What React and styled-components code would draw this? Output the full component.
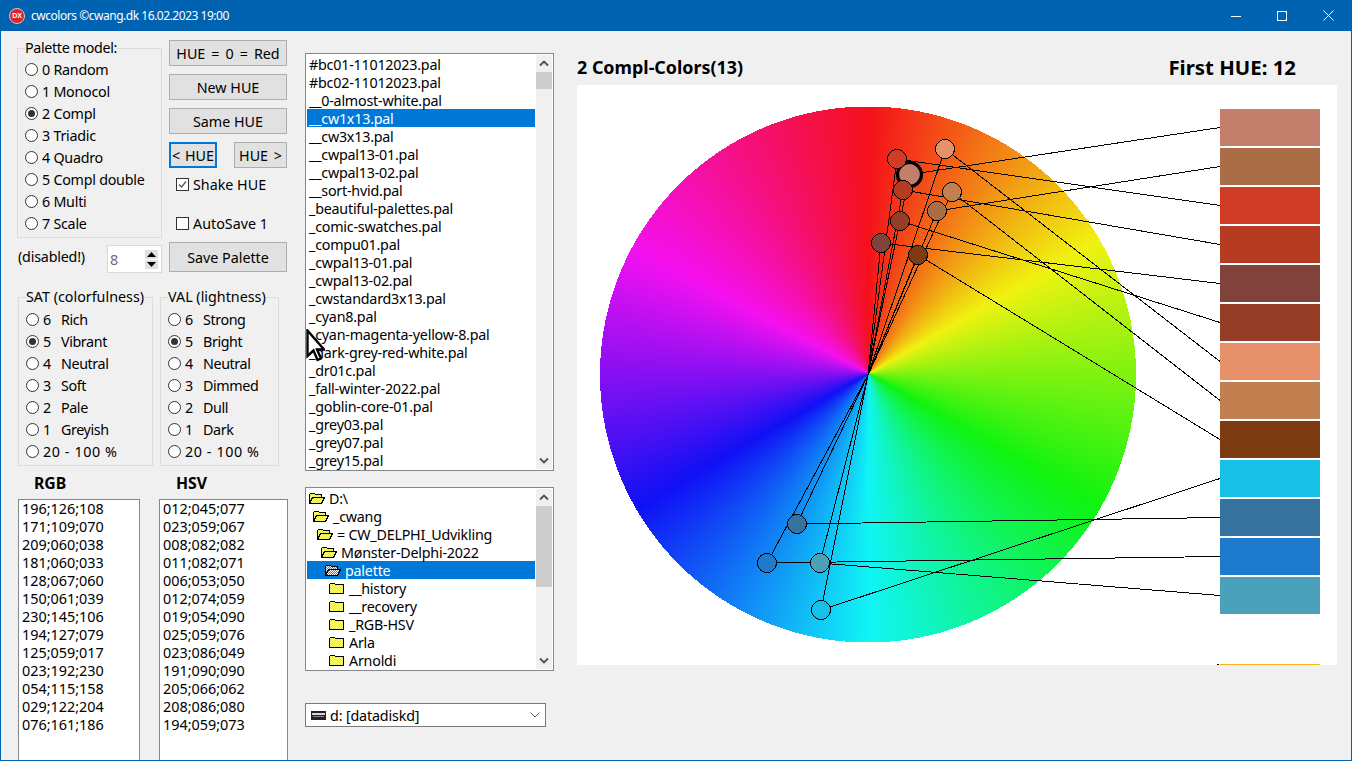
import React from 'react';
import styled, { createGlobalStyle } from 'styled-components';

const Global = createGlobalStyle`
  html, body { margin: 0; padding: 0; overflow: hidden; background: #f0f0f0; }
  body { font-family: "Noto Sans", "Open Sans", sans-serif; font-size: 14.3px; color: #000; }
  fieldset, legend { margin: 0; padding: 0; }
`;

const Window = styled.div`
  position: relative; width: 1352px; height: 761px; box-sizing: border-box;
  display: flex; flex-direction: column; overflow: hidden;
  background: #f0f0f0; border: 1px solid #0063b1; border-top: 0;
`;
const TitleBar = styled.header`
  flex: none; height: 31px; margin: 0 -1px; background: #0063b1; color: #fff;
  display: flex; align-items: center; padding: 0 1px 0 9px; font-size: 12px;
`;
const AppBadge = styled.span`
  width: 16px; height: 16px; border-radius: 50%; background: #d9262c; border: 1px solid #d8c8c8;
  color: #fff; font-size: 7px; font-weight: 700; display: flex; align-items: center; justify-content: center;
  margin-right: 6px; box-sizing: border-box; font-family: "Liberation Sans", sans-serif; flex: none;
`;
const TitleText = styled.span` flex: 1; white-space: nowrap; letter-spacing: -0.47px; `;
const WinButton = styled.span`
  width: 46px; height: 31px; display: flex; align-items: center; justify-content: center; flex: none;
`;
const Body = styled.main`
  flex: 1; min-height: 0; display: flex; padding: 8px 0 0 16px; overflow: hidden;
`;
const ControlsColumn = styled.section`
  width: 272px; flex: none; display: flex; flex-direction: column;
`;
const TopRow = styled.div` display: flex; gap: 7px; `;
const PaletteCol = styled.div` width: 145px; flex: none; `;
const ButtonCol = styled.div` width: 118px; flex: none; padding-top: 1px; display: flex; flex-direction: column; `;
const Group = styled.fieldset`
  box-sizing: border-box; width: ${p => p.$w}px; border: 1px solid #dcdcdc; padding: ${p => p.$pt}px 0 3px 7px; min-width: 0;
`;
const Legend = styled.legend` line-height: 18px; padding: 0; white-space: nowrap; letter-spacing: ${p => p.$ls || 0}px; `;
const RadioRow = styled.div`
  height: 22px; display: flex; align-items: center; gap: 4px; white-space: nowrap; letter-spacing: ${p => p.$ls || 0}px;
`;
const RadioMark = styled.span`
  width: 13px; height: 13px; box-sizing: border-box; border: 1px solid #333; border-radius: 50%; background: #fff;
  flex: none; display: flex; align-items: center; justify-content: center;
  &::after { content: ''; width: 7px; height: 7px; border-radius: 50%; background: ${p => p.$on ? '#333' : 'transparent'}; }
`;
const RadioNum = styled.span` width: 14px; flex: none; `;
const Button = styled.button`
  box-sizing: border-box; height: ${p => p.$h || 26}px; width: ${p => p.$w ? p.$w + 'px' : '100%'};
  margin: ${p => p.$mt || 0}px 0 0; padding: 0; background: #e1e1e1; color: #000;
  border: ${p => p.$focus ? '2px solid #0078d7' : '1px solid #adadad'};
  font: inherit; white-space: nowrap; display: block; word-spacing: ${p => p.$ws || 0}px;
`;
const HueRow = styled.div` display: flex; justify-content: space-between; margin-top: 8px; `;
const CheckRow = styled.div`
  display: flex; align-items: center; gap: 4px; height: 18px; margin: ${p => p.$mt}px 0 0 7px; white-space: nowrap;
`;
const CheckMark = styled.span`
  width: 13px; height: 13px; box-sizing: border-box; border: 1px solid #333; background: #fff; flex: none;
  display: flex; align-items: center; justify-content: center;
`;
const SpinRow = styled.div` display: flex; align-items: center; justify-content: space-between; margin: 7px 0 0 1px; height: 28px; `;
const SpinLabel = styled.span` padding-bottom: 6px; letter-spacing: -0.2px; `;
const SpinBox = styled.div`
  box-sizing: border-box; width: 55px; height: 28px; background: #fff; border: 1px solid #d9d9d9;
  display: flex; align-items: center; justify-content: space-between; padding: 0 3px 0 2px; color: #6d6d6d;
`;
const SpinArrows = styled.div` display: flex; flex-direction: column; gap: 1px; `;
const SpinArrow = styled.span`
  width: 13px; height: 9px; background: #e1e1e1; border: 0; display: flex; align-items: center; justify-content: center;
`;
const GroupsRow = styled.div` display: flex; gap: 7px; margin: 15px 0 0 1px; `;
const ValuesGrid = styled.div`
  display: grid; grid-template-columns: 122px 129px; column-gap: 19px; margin: 8px 0 0 1px;
`;
const ValueHead = styled.div` font-weight: 700; line-height: 18px; padding-left: ${p => p.$pl}px; height: 25px; font-size: 15.8px; `;
const ValueBox = styled.div`
  box-sizing: border-box; height: 300px; background: #fff; border: 1px solid #828790; padding: 0 0 0 3px; line-height: 18px; font-size: 14.4px;
`;
const ListColumn = styled.section`
  width: 249px; flex: none; margin-left: 16px; padding-top: 14px; display: flex; flex-direction: column;
`;
const ListFrame = styled.div`
  box-sizing: border-box; height: ${p => p.$h}px; margin-top: ${p => p.$mt || 0}px; background: #fff; border: 1px solid #828790;
  padding: 1px; display: flex; gap: 1px; overflow: hidden;
`;
const ListBody = styled.ul` flex: 1; min-width: 0; list-style: none; margin: 0; padding: 0; letter-spacing: -0.22px; `;
const ListRow = styled.li`
  box-sizing: border-box; height: 18px; line-height: 18px; padding: 1px 0 0 ${p => p.$indent || 2}px; white-space: nowrap;
  background: ${p => p.$sel ? '#0078d7' : 'transparent'}; color: ${p => p.$sel ? '#fff' : '#000'};
  display: flex; align-items: flex-start; gap: 4px;
`;
const ScrollBar = styled.div` width: 16px; flex: none; background: #f0f0f0; display: flex; flex-direction: column; `;
const ScrollBtn = styled.div` height: 17px; flex: none; display: flex; align-items: center; justify-content: center; `;
const Track = styled.div` flex: 1; `;
const Thumb = styled.div` height: ${p => p.$h}px; background: #cdcdcd; `;
const FolderIcon = styled.svg` flex: none; margin-top: 2px; `;
const Combo = styled.div`
  box-sizing: border-box; width: 241px; height: 24px; margin-top: 32px; background: #fff; border: 1px solid #7a7a7a;
  display: flex; align-items: center; padding: 0 5px; gap: 4px; letter-spacing: -0.15px;
`;
const DriveIcon = styled.svg` flex: none; `;
const ComboText = styled.span` flex: 1; white-space: nowrap; `;
const ChartColumn = styled.section` width: 760px; flex: none; margin-left: 23px; display: flex; flex-direction: column; `;
const ChartHead = styled.div`
  height: 46px; flex: none; box-sizing: border-box; padding: 0 41px 7px 0; display: flex; justify-content: space-between; align-items: flex-end;
`;
const ChartTitle = styled.h2` margin: 0; font-size: 17.9px; font-weight: 700; line-height: 22px; white-space: nowrap; `;
const HueTitle = styled.h2` margin: 0; font-size: 20.4px; font-weight: 700; line-height: 22px; white-space: nowrap; `;
const Canvas = styled.div`
  position: relative; height: 580px; flex: none; background: #fff; overflow: hidden;
  display: flex; align-items: flex-start; padding-left: 23px;
`;
const Wheel = styled.div`
  width: 536px; height: 537px; margin-top: 21px; flex: none;
  background: conic-gradient(from 0deg at 269px 267.5px, #f5101a, #f0f210 60deg, #10f310 120deg, #10f5f5 180deg, #1010f5 240deg, #f510f0 298deg, #f5101a);
`;
const Swatches = styled.div` margin: 24px 0 0 84px; width: 100px; display: flex; flex-direction: column; gap: 2px; flex: none; `;
const Swatch = styled.div` height: 37px; flex: none; background: ${p => p.$c}; `;
const NextSwatch = styled(Swatch)` margin-top: 48px; `;
const Overlay = styled.svg` position: absolute; left: 0; top: 0; width: 760px; height: 580px; `;
const Cursor = styled.svg` position: absolute; left: 305px; top: 329px; `;

const palette = ['Random','Monocol','Compl','Triadic','Quadro','Compl double','Multi','Scale'];
const sat = ['Rich','Vibrant','Neutral','Soft','Pale','Greyish'];
const val = ['Strong','Bright','Neutral','Dimmed','Dull','Dark'];
const rgb = ['196;126;108','171;109;070','209;060;038','181;060;033','128;067;060','150;061;039','230;145;106','194;127;079','125;059;017','023;192;230','054;115;158','029;122;204','076;161;186'];
const hsv = ['012;045;077','023;059;067','008;082;082','011;082;071','006;053;050','012;074;059','019;054;090','025;059;076','023;086;049','191;090;090','205;066;062','208;086;080','194;059;073'];
const files = ['#bc01-11012023.pal','#bc02-11012023.pal','__0-almost-white.pal','__cw1x13.pal','__cw3x13.pal','__cwpal13-01.pal','__cwpal13-02.pal','__sort-hvid.pal','_beautiful-palettes.pal','_comic-swatches.pal','_compu01.pal','_cwpal13-01.pal','_cwpal13-02.pal','_cwstandard3x13.pal','_cyan8.pal','_cyan-magenta-yellow-8.pal','_dark-grey-red-white.pal','_dr01c.pal','_fall-winter-2022.pal','_goblin-core-01.pal','_grey03.pal','_grey07.pal','_grey15.pal'];
const dirs = [['D:\\',2,1],['_cwang',6,1],['= CW_DELPHI_Udvikling',10,1],['Mønster-Delphi-2022',14,1],['palette',18,2],['__history',22,0],['__recovery',22,0],['_RGB-HSV',22,0],['Arla',22,0],['Arnoldi',22,0]];
const points = [[909.5,174.5],[937,211],[897,159],[903,190],[881,243],[900,221],[945,149],[952,192],[918,255],[821,610],[797,524],[767,563],[820,563]];
const CX = 868, CY = 375;
const css = s => { const [r,g,b] = s.split(';').map(Number); return `rgb(${r},${g},${b})`; };

// stair-stepped circular outline: the original wheel is drawn without anti-aliasing
const wheelClip = (() => {
  const R = 268, C = 268, cy = 268.5, left = [], right = [];
  for (let y = 0; y < 537; y += 1) {
    const dy = y + 0.5 - cy;
    const half = Math.round(Math.sqrt(Math.max(0, R * R - dy * dy)));
    right.push(`${C + half}px ${y}px`, `${C + half}px ${y + 1}px`);
    left.push(`${C - half}px ${y}px`, `${C - half}px ${y + 1}px`);
  }
  return `polygon(${[...right, ...left.reverse()].join(',')})`;
})();

const Chevron = ({ up }) => (
  <svg width="10" height="7" viewBox="0 0 10 7"><path d={up ? 'M1 5.5 L5 1.5 L9 5.5' : 'M1 1.5 L5 5.5 L9 1.5'} fill="none" stroke="#505050" strokeWidth="1.8" /></svg>
);
const Scroll = ({ thumb }) => (
  <ScrollBar>
    <ScrollBtn><Chevron up /></ScrollBtn>
    <Thumb $h={thumb} />
    <Track />
    <ScrollBtn><Chevron /></ScrollBtn>
  </ScrollBar>
);
const Folder = ({ kind }) => (
  <FolderIcon width="16" height="12" viewBox="0 0 16 12" shapeRendering="crispEdges">
    <defs>
      <pattern id={`dith${kind}`} width="2" height="2" patternUnits="userSpaceOnUse">
        <rect width="2" height="2" fill={kind === 2 ? '#fff' : '#ffff66'} />
        <rect width="1" height="1" fill={kind === 2 ? '#777' : '#e0e090'} />
        <rect x="1" y="1" width="1" height="1" fill={kind === 2 ? '#777' : '#e0e090'} />
      </pattern>
    </defs>
    {kind === 0 ? (
      <path d="M.5 11.5 V2.5 L1.5 1.5 H5.5 L6.5 2.5 H14.5 V11.5 Z" fill="url(#dith0)" stroke="#000" />
    ) : (
      <g stroke="#000">
        <path d="M.5 11.5 V2.5 L1.5 1.5 H5.5 L6.5 2.5 H12.5 V5" fill={`url(#dith${kind})`} />
        <path d="M.5 11.5 L3.5 5.5 H15.5 L12.5 11.5 Z" fill={`url(#dith${kind})`} />
      </g>
    )}
  </FolderIcon>
);

const PaletteRadios = () => palette.map((t, i) => (
  <RadioRow key={t} $ls={-0.25}><RadioMark $on={i === 2} />{`${i} ${t}`}</RadioRow>
));
const LevelRadios = ({ items }) => (
  <>
    {items.map((t, i) => (
      <RadioRow key={t} $ls={-0.4}>
        <RadioMark $on={i === 1} />
        <RadioNum>{6 - i}</RadioNum>{t}
      </RadioRow>
    ))}
    <RadioRow $ls={0.6}><RadioMark />20 - 100 %</RadioRow>
  </>
);

export default function App() {
  return (
    <Window>
      <Global />
      <TitleBar>
        <AppBadge>DX</AppBadge>
        <TitleText>cwcolors ©cwang.dk 16.02.2023 19:00</TitleText>
        <WinButton><svg width="10" height="10" viewBox="0 0 10 10"><path d="M0 5.5 H10" stroke="#fff" /></svg></WinButton>
        <WinButton><svg width="10" height="10" viewBox="0 0 10 10"><rect x=".5" y=".5" width="9" height="9" fill="none" stroke="#fff" /></svg></WinButton>
        <WinButton><svg width="11" height="11" viewBox="0 0 11 11"><path d="M.5 .5 L10.5 10.5 M10.5 .5 L.5 10.5" stroke="#fff" /></svg></WinButton>
      </TitleBar>
      <Body>
        <ControlsColumn>
          <TopRow>
            <PaletteCol>
              <Group $w={145} $pt={1}>
                <Legend $ls={-0.35}>Palette model:</Legend>
                <PaletteRadios />
              </Group>
              <SpinRow>
                <SpinLabel>(disabled!)</SpinLabel>
                <SpinBox>
                  8
                  <SpinArrows>
                    <SpinArrow><svg width="9" height="5" viewBox="0 0 9 5"><path d="M4.5 0 L9 5 H0 Z" /></svg></SpinArrow>
                    <SpinArrow><svg width="9" height="5" viewBox="0 0 9 5"><path d="M0 0 H9 L4.5 5 Z" /></svg></SpinArrow>
                  </SpinArrows>
                </SpinBox>
              </SpinRow>
            </PaletteCol>
            <ButtonCol>
              <Button $ws={2.3}>HUE = 0 = Red</Button>
              <Button $mt={8}>New HUE</Button>
              <Button $mt={8}>Same HUE</Button>
              <HueRow>
                <Button $w={48} $focus $ws={1}>&lt; HUE</Button>
                <Button $w={53} $ws={2}>HUE &gt;</Button>
              </HueRow>
              <CheckRow $mt={7}>
                <CheckMark><svg width="11" height="11" viewBox="0 0 11 11"><path d="M2 5.5 L4.5 8 L9 2.5" fill="none" stroke="#555" strokeWidth="1.2" /></svg></CheckMark>
                Shake HUE
              </CheckRow>
              <CheckRow $mt={21}><CheckMark />AutoSave 1</CheckRow>
              <Button $h={30} $mt={10}>Save Palette</Button>
            </ButtonCol>
          </TopRow>
          <GroupsRow>
            <Group $w={135} $pt={2}>
              <Legend>SAT (colorfulness)</Legend>
              <LevelRadios items={sat} />
            </Group>
            <Group $w={119} $pt={2}>
              <Legend>VAL (lightness)</Legend>
              <LevelRadios items={val} />
            </Group>
          </GroupsRow>
          <ValuesGrid>
            <ValueHead $pl={16}>RGB</ValueHead>
            <ValueHead $pl={17}>HSV</ValueHead>
            <ValueBox>{rgb.map(v => <div key={v}>{v}</div>)}</ValueBox>
            <ValueBox>{hsv.map(v => <div key={v}>{v}</div>)}</ValueBox>
          </ValuesGrid>
        </ControlsColumn>
        <ListColumn>
          <ListFrame $h={418}>
            <ListBody>
              {files.map((f, i) => <ListRow key={f} $sel={i === 3}>{f}</ListRow>)}
            </ListBody>
            <Scroll thumb={17} />
          </ListFrame>
          <ListFrame $h={184} $mt={16}>
            <ListBody>
              {dirs.map(([t, ind, k], i) => (
                <ListRow key={t} $indent={ind} $sel={i === 4}><Folder kind={k} />{t}</ListRow>
              ))}
            </ListBody>
            <Scroll thumb={81} />
          </ListFrame>
          <Combo>
            <DriveIcon width="15" height="9" viewBox="0 0 15 9" shapeRendering="crispEdges">
              <rect width="15" height="9" rx="1" fill="#222" />
              <rect x="1" y="2" width="13" height="2" fill="#d8d8d8" />
              <rect x="2" y="5" width="11" height="1" fill="#888" />
            </DriveIcon>
            <ComboText>d: [datadiskd]</ComboText>
            <svg width="10" height="6" viewBox="0 0 10 6"><path d="M.5 .5 L5 5 L9.5 .5" fill="none" stroke="#606060" /></svg>
          </Combo>
        </ListColumn>
        <ChartColumn>
          <ChartHead>
            <ChartTitle>2 Compl-Colors(13)</ChartTitle>
            <HueTitle>First HUE: 12</HueTitle>
          </ChartHead>
          <Canvas>
            <Wheel style={{ clipPath: wheelClip }} />
            <Swatches>
              {rgb.map(v => <Swatch key={v} $c={css(v)} />)}
              <NextSwatch $c="#f5b21c" />
            </Swatches>
            <Overlay viewBox="577 85 760 580">
              <g stroke="#000" strokeWidth="1" shapeRendering="crispEdges">
                {points.map(([x, y], i) => (
                  <g key={i}>
                    <line x1={CX} y1={CY} x2={x} y2={y} />
                    <line x1={x} y1={y} x2={1220} y2={127.5 + 39 * i} />
                  </g>
                ))}
                <line x1="1217" y1="664.5" x2="1219" y2="664.5" />
              </g>
              {points.map(([x, y], i) => (
                <circle key={i} cx={x} cy={y} r={i === 0 ? 12 : 9.5} fill={css(rgb[i])} stroke="#000" strokeWidth={i === 0 ? 3.2 : 1} shapeRendering={i === 0 ? 'auto' : 'crispEdges'} />
              ))}
            </Overlay>
          </Canvas>
        </ChartColumn>
      </Body>
      <Cursor width="19" height="33" viewBox="0 0 19 33">
        <path d="M1.5 1.5 V27 L7.5 21.5 L11.5 31 L15 29.5 L11 20.5 H18 Z" fill="#fff" stroke="#000" strokeWidth="2.4" />
      </Cursor>
    </Window>
  );
}
